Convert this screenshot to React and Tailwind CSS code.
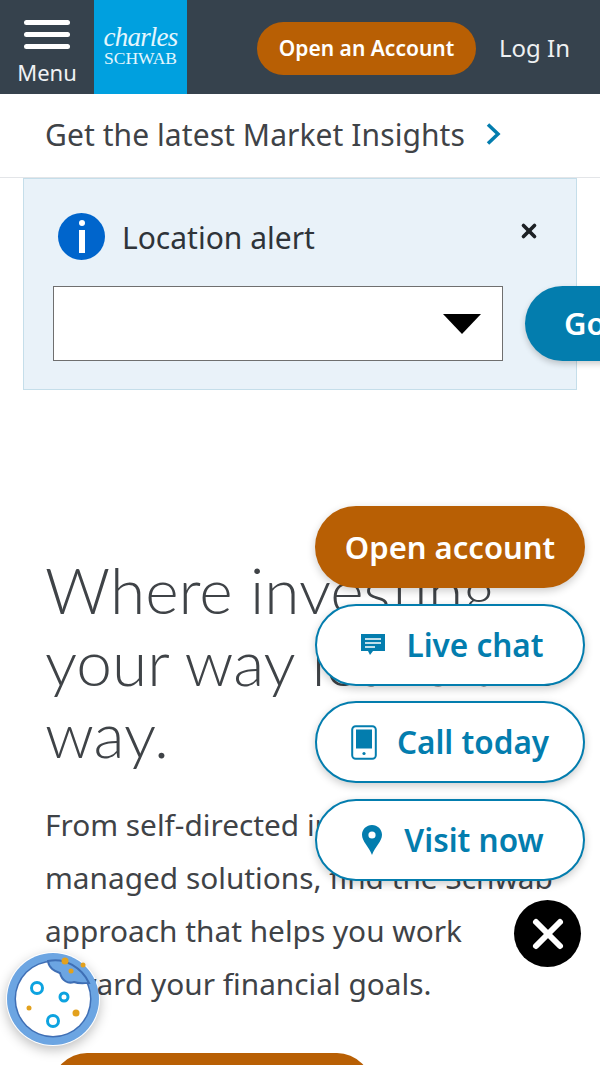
import { X } from 'lucide-react';

const sans = "font-['Noto_Sans',sans-serif]";

function ChatIcon() {
  return (
    <svg width="26" height="24" viewBox="0 0 26 24">
      <path d="M1 1h24v17H13l-3 4-2-4H1z" fill="#037DAE" />
      <path d="M5 6h16M5 10h16M5 14h10" stroke="#fff" strokeWidth="1.6" />
    </svg>
  );
}

function PhoneIcon() {
  return (
    <svg width="26" height="35" viewBox="0 0 26 35">
      <rect x="1.2" y="1.2" width="23.6" height="32.6" rx="3.5" fill="#fff" stroke="#037DAE" strokeWidth="2" />
      <rect x="5" y="4.5" width="16" height="19" fill="#037DAE" />
      <circle cx="13" cy="28.5" r="1.6" fill="#037DAE" />
    </svg>
  );
}

function PinIcon() {
  return (
    <svg width="20" height="30" viewBox="0 0 20 30">
      <path d="M10 0C4.500 0 0 4.300 0 9.800 0 16.500 7 22 10 30c3-8 10-13.500 10-20.200C20 4.300 15.500 0 10 0z" fill="#037DAE" />
      <circle cx="10" cy="10" r="3.600" fill="#fff" />
    </svg>
  );
}

function Cookie() {
  return (
    <svg width="94" height="94" viewBox="0 0 94 94">
      <circle cx="47" cy="47" r="46" fill="#6CA5E2" />
      <circle cx="47" cy="47" r="38.500" fill="#3F6FB5" />
      <circle cx="47" cy="47" r="37" fill="#fff" />
      <path d="M42 9c1 8 7 10 12 12 2 8 8 11 14 9 5 2 10 1 15 1 -7-15-24-26-41-22z" fill="#6CA5E2" stroke="#3F6FB5" strokeWidth="2" />
      <circle cx="59" cy="9" r="3.500" fill="#E3A11D" />
      <circle cx="77" cy="13" r="2.500" fill="#E3A11D" />
      <circle cx="65" cy="19" r="2.500" fill="#E3A11D" />
      <circle cx="31" cy="36" r="5.500" fill="#fff" stroke="#0DA3E0" strokeWidth="3" />
      <circle cx="58" cy="45" r="4" fill="#fff" stroke="#0DA3E0" strokeWidth="3" />
      <circle cx="47" cy="69" r="5.500" fill="#fff" stroke="#0DA3E0" strokeWidth="3" />
      <circle cx="23" cy="56" r="2.500" fill="#E3A11D" />
      <circle cx="70" cy="61" r="3.500" fill="#E3A11D" />
    </svg>
  );
}

function FloatButton({ icon, label, extra }) {
  return (
    <button className={`flex h-[82px] w-full items-center justify-center rounded-[41px] border-2 border-[#037DAE] bg-white text-[31.5px] font-semibold text-[#037DAE] shadow-[0_3px_8px_rgba(0,0,0,0.2)] ${extra}`}>
      {icon}
      {label}
    </button>
  );
}

export default function App() {
  return (
    <div className={`relative h-[1065px] w-[600px] overflow-hidden bg-white ${sans}`}>
      <header className="flex h-[94px] items-center bg-[#36424D] text-white">
        <div className="flex w-[94px] flex-col items-center pt-[12px]">
          <div className="flex w-[46px] flex-col gap-[7px]">
            <span className="h-[5px] rounded-full bg-white" />
            <span className="h-[5px] rounded-full bg-white" />
            <span className="h-[5px] rounded-full bg-white" />
          </div>
          <span className="mt-[8px] text-[22px] leading-[30px] text-[#f0f2f4]">Menu</span>
        </div>
        <div className="flex h-full w-[93px] flex-col items-center justify-center bg-[#00A0DF] pb-[3px]">
          <span className="font-['Liberation_Serif',serif] text-[27px] italic leading-[24px] tracking-[-0.8px] text-[#e4f6fd]">charles</span>
          <span className="font-['Liberation_Serif',serif] text-[17.5px] leading-[18px] text-[#e4f6fd]">SCHWAB</span>
        </div>
        <button className="ml-[70px] mt-[3px] flex h-[53px] w-[219px] items-center justify-center rounded-full bg-[#B85F04] text-[21px] font-semibold">
          Open an Account
        </button>
        <span className="ml-[23px] mt-[1px] text-[24px] text-[#eef0f2]">Log In</span>
      </header>

      <div className="flex h-[84px] items-center border-b border-[#e3e5e8] pb-[3px] pl-[45px] text-[#3f4347]">
        <span className="text-[30px] tracking-[0.07px]">Get the latest Market Insights</span>
        <svg className="ml-[20px]" width="16" height="24" viewBox="0 0 16 24" fill="none">
          <path d="M3 2.500 13 12 3 21.500" stroke="#037DAE" strokeWidth="3.500" />
        </svg>
      </div>

      <div className="ml-[23px] flex h-[212px] w-[554px] flex-col border border-[#c5deea] bg-[#E9F2F9] pl-[29px] pt-[34px]">
        <div className="flex items-start">
          <div className="ml-[5px] flex h-[47px] w-[47px] shrink-0 items-center justify-center rounded-full bg-[#0065CC]">
            <svg width="10" height="33" viewBox="0 0 10 33" fill="#fff">
              <rect x="2" y="0" width="6" height="6" rx="3" />
              <rect x="2" y="10" width="6" height="23" />
            </svg>
          </div>
          <span className="ml-[17px] mt-[6px] w-[193px] whitespace-nowrap text-[30px] leading-[38px] text-[#2f3439]">Location alert</span>
          <X size={22} strokeWidth={4} className="ml-[203px] mt-[7px] shrink-0 text-[#1d2125]" />
        </div>
        <div className="mt-[26px] flex items-center">
          <div className="flex h-[75px] w-[450px] shrink-0 items-center justify-end border-[1.5px] border-[#6f6f6f] bg-white pr-[21px]">
            <svg width="38" height="20" viewBox="0 0 38 20"><path d="M0 0h38L19 20z" fill="#000" /></svg>
          </div>
          <button className="ml-[22px] h-[75px] w-[100px] shrink-0 rounded-l-[38px] bg-[#037DAE] pl-[39px] text-left text-[31px] font-semibold text-white shadow-[0_3px_6px_rgba(0,0,0,0.2)]">
            Go
          </button>
        </div>
      </div>

      <main className="pl-[45px] pt-[164px] text-[#3f4347]">
        <h1 className="w-[520px] font-['Lato',sans-serif] text-[64px] font-light leading-[72px]">
          Where investing your way leads the way.
        </h1>
        <p className="mt-[28px] w-[515px] text-[29.8px] leading-[53px]">
          From self-directed investing to fully managed solutions, find the Schwab approach that helps you work toward your financial goals.
        </p>
        <div className="ml-[7px] mt-[43px] h-[70px] w-[320px] rounded-full bg-[#B85F04]" />
      </main>

      <div className="absolute left-[315px] top-[506px] flex w-[270px] flex-col gap-[15.500px]">
        <button className="h-[82px] rounded-[41px] bg-[#B85F04] text-[31px] font-semibold text-white shadow-[0_3px_8px_rgba(0,0,0,0.2)]">
          Open account
        </button>
        <FloatButton icon={<ChatIcon />} label="Live chat" extra="gap-5 pl-[4px]" />
        <FloatButton icon={<PhoneIcon />} label="Call today" extra="gap-5" />
        <FloatButton icon={<PinIcon />} label="Visit now" extra="gap-[22px] pl-[6px]" />
      </div>

      <div className="absolute left-[514px] top-[900px] flex h-[67px] w-[67px] items-center justify-center rounded-full bg-black">
        <X size={48} strokeWidth={3} className="text-white" />
      </div>

      <div className="absolute left-[6px] top-[952px] rounded-full shadow-[0_4px_12px_rgba(0,0,0,0.25)]">
        <Cookie />
      </div>
    </div>
  );
}
